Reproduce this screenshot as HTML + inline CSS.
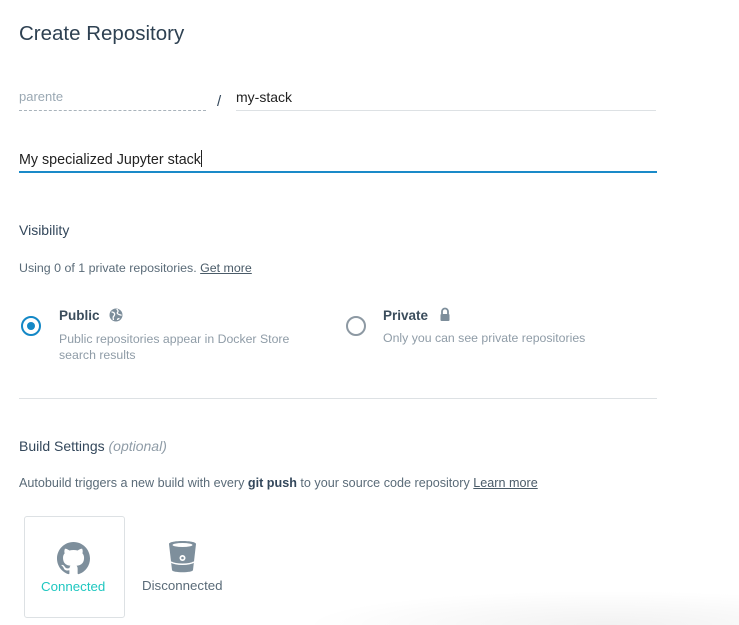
<!DOCTYPE html>
<html style="overflow:hidden"><head><meta charset="utf-8"><style>
html,body{margin:0;width:739px;height:625px;overflow:hidden}
body{background:#fff;font-family:"Liberation Sans",sans-serif;position:relative;color:#33475b}
.a{position:absolute;white-space:nowrap}
</style></head><body>
<div class="a" style="left:19px;top:22px;font-size:20.5px;color:#2e4152">Create Repository</div>
<div class="a" style="left:19px;top:89px;font-size:13px;color:#9aa8b3">parente</div>
<div class="a" style="left:19px;top:110px;width:187px;border-top:1px dashed #a9b3bb"></div>
<div class="a" style="left:217px;top:93px;font-size:15px;color:#33475b">/</div>
<div class="a" style="left:236px;top:89px;font-size:14px;color:#222">my-stack</div>
<div class="a" style="left:236px;top:110px;width:420px;border-top:1px solid #dde1e4"></div>
<div class="a" style="left:19px;top:150px;font-size:14.3px;color:#222">My specialized Jupyter stack<span style="display:inline-block;width:1px;height:17px;background:#222;vertical-align:-3px"></span></div>
<div class="a" style="left:19px;top:171px;width:638px;height:2px;background:#1a8ac8"></div>
<div class="a" style="left:19px;top:222px;font-size:14px;color:#33475b">Visibility</div>
<div class="a" style="left:19px;top:261px;font-size:12.4px;color:#5a6b78">Using 0 of 1 private repositories. <span style="text-decoration:underline;color:#4a5b68">Get more</span></div>
<div class="a" style="left:21px;top:316px;width:16px;height:16px;border:2px solid #1488c6;border-radius:50%"></div>
<div class="a" style="left:27px;top:322px;width:8px;height:8px;background:#1488c6;border-radius:50%"></div>
<div class="a" style="left:59px;top:308px;font-size:13.5px;font-weight:bold;color:#3b4d5c">Public</div>
<svg class="a" style="left:109px;top:308px" width="14" height="14" viewBox="0 0 14 14"><circle cx="7" cy="7" r="6.5" fill="#7d8e9b"/><path d="M2.5 4c1.5 0 2.5.5 3 1.5S5 8 4.5 8.5 4 10 4.5 12M8 1c0 1 1.5 1.5 1 2.5S7.5 5 9 6s2.5.5 3.5 1.5M8.5 12c0-1 1-1.5 2-1.5" stroke="#fff" stroke-width="1.3" fill="none"/></svg>
<div class="a" style="left:59px;top:331px;font-size:12.3px;color:#8f9ca7;line-height:16px">Public repositories appear in Docker Store<br>search results</div>
<div class="a" style="left:346px;top:316px;width:16px;height:16px;border:2px solid #8d99a3;border-radius:50%"></div>
<div class="a" style="left:383px;top:308px;font-size:13.5px;font-weight:bold;color:#3b4d5c">Private</div>
<svg class="a" style="left:439px;top:307px" width="12" height="15" viewBox="0 0 12 15"><path d="M3 7V4.5a3 3 0 0 1 6 0V7" stroke="#7d8e9b" stroke-width="1.8" fill="none"/><rect x="1.5" y="7" width="9" height="7" rx="1" fill="#7d8e9b"/></svg>
<div class="a" style="left:383px;top:331px;font-size:12.3px;color:#8f9ca7">Only you can see private repositories</div>
<div class="a" style="left:19px;top:398px;width:638px;border-top:1px solid #dde1e4"></div>
<div class="a" style="left:19px;top:438px;font-size:14px;color:#33475b">Build Settings <i style="color:#8f9ca7">(optional)</i></div>
<div class="a" style="left:19px;top:476px;font-size:12.6px;color:#5a6b78">Autobuild triggers a new build with every <b style="color:#33475b">git push</b> to your source code repository <span style="text-decoration:underline;color:#4a5b68">Learn more</span></div>
<div class="a" style="left:24px;top:516px;width:99px;height:100px;border:1px solid #dde1e4;border-radius:3px"></div>
<svg class="a" style="left:57px;top:542px" width="33" height="33" viewBox="0 0 16 16"><path fill="#7e8f9c" d="M8 0C3.58 0 0 3.58 0 8c0 3.540 2.29 6.53 5.47 7.59.4.07.55-.17.55-.38 0-.19-.01-.82-.01-1.49-2.01.37-2.530-.49-2.69-.94-.09-.23-.48-.94-.82-1.13-.28-.15-.68-.52-.01-.53.63-.01 1.08.58 1.23.82.72 1.21 1.87.87 2.33.66.07-.52.28-.87.51-1.07-1.78-.2-3.64-.89-3.640-3.95 0-.87.31-1.59.82-2.15-.08-.2-.36-1.02.08-2.12 0 0 .67-.21 2.2.82.64-.18 1.32-.27 2-.27.68 0 1.36.09 2 .27 1.53-1.04 2.2-.82 2.2-.82.44 1.1.16 1.92.08 2.12.51.56.82 1.27.82 2.15 0 3.07-1.87 3.75-3.65 3.95.29.25.54.73.54 1.48 0 1.07-.01 1.93-.01 2.2 0 .21.15.46.55.38A8.013 8.013 0 0016 8c0-4.42-3.58-8-8-8z"/></svg>
<div class="a" style="left:41px;top:579px;font-size:13.3px;color:#1fc7c0">Connected</div>
<svg class="a" style="left:168px;top:541px" width="29" height="32" viewBox="0 0 29 32"><path d="M1 3c0-4 27-4 27 0l-3 26c0 3-21 3-21 0z" fill="#7e8f9c"/><ellipse cx="14.5" cy="4" rx="10" ry="2" fill="#fff"/><circle cx="14.5" cy="17" r="3" fill="#fff"/><circle cx="14.5" cy="17" r="1.3" fill="#7e8f9c"/><path d="M3 21c5 3 18 3 23 0" stroke="#fff" stroke-width="1.5" fill="none"/></svg>
<div class="a" style="left:142px;top:578px;font-size:13.3px;color:#5a6b78">Disconnected</div>
<div class="a" style="left:300px;top:590px;width:439px;height:35px;background:radial-gradient(ellipse at 70% 100%,rgba(0,0,0,0.05),rgba(0,0,0,0) 70%)"></div>
</body></html>
